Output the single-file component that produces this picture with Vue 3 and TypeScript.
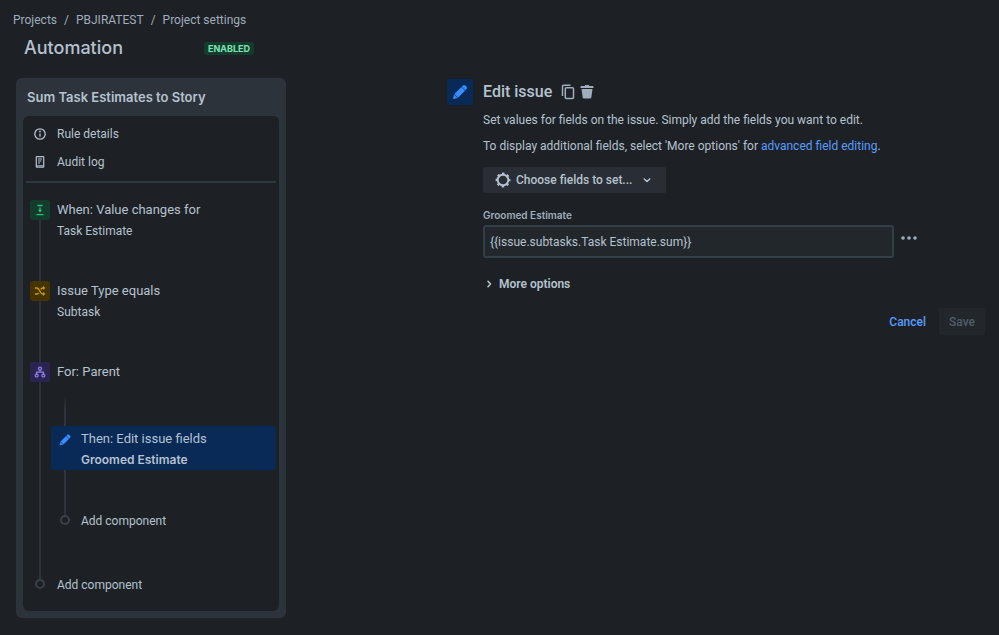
<script setup lang="ts">
import { ref } from 'vue'

interface Crumb {
  label: string
}

interface RuleNode {
  kind: 'trigger' | 'condition'
  title: string
  detail: string
}

const crumbs: Crumb[] = [
  { label: 'Projects' },
  { label: 'PBJIRATEST' },
  { label: 'Project settings' },
]

const nodes: RuleNode[] = [
  { kind: 'trigger', title: 'When: Value changes for', detail: 'Task Estimate' },
  { kind: 'condition', title: 'Issue Type equals', detail: 'Subtask' },
]

const pencil =
  'M13.9 5.3l4.900 4.900L9.300 19.600l-4.900-4.900zM4 15.300l4.700 4.700-5 1.200c-.6.1-1-.4-.9-.9zM14.300 4.900l1.700-1.700c.9-.9 2.200-.9 3.100 0l1.700 1.700c.9.9.9 2.200 0 3.100l-1.700 1.700z'

const estimate = ref('{{issue.subtasks.Task Estimate.sum}}')
</script>

<template>
  <div class="page">
    <header class="top">
      <nav class="crumbs" aria-label="Breadcrumb">
        <template v-for="(crumb, index) in crumbs" :key="crumb.label">
          <span v-if="index > 0" class="slash">/</span>
          <a href="#">{{ crumb.label }}</a>
        </template>
      </nav>
      <div class="title-row">
        <h1>Automation</h1>
        <span class="badge">ENABLED</span>
      </div>
    </header>

    <div class="columns">
      <aside class="rule">
        <h2>Sum Task Estimates to Story</h2>
        <div class="rule-body">
          <div class="links">
            <a href="#">
              <svg width="14" height="14" viewBox="0 0 14 14" fill="none" stroke="currentColor" stroke-width="1.3">
                <circle cx="7" cy="7" r="5.200" />
                <path d="M7 6.4v3.4" />
                <circle cx="7" cy="4.500" r=".9" fill="currentColor" stroke="none" />
              </svg>
              Rule details
            </a>
            <a href="#">
              <svg width="14" height="14" viewBox="0 0 14 14" fill="none" stroke="currentColor" stroke-width="1.200">
                <rect x="3.300" y="1.600" width="7.400" height="10.600" rx=".5" />
                <path d="M5 4h4M5 6h3.500M5 8h2" />
                <path d="M3.400 10.800h7.200" stroke-width="1" />
              </svg>
              Audit log
            </a>
          </div>

          <div class="chain">
            <div v-for="node in nodes" :key="node.title" class="node">
              <div class="rail">
                <span class="tile" :class="node.kind">
                  <svg v-if="node.kind === 'trigger'" width="12" height="12" viewBox="0 0 12 12" fill="none" stroke="currentColor" stroke-width="1.3">
                    <path d="M3.4 1.5h5.2M6 3.6v4.2M2.5 10.7h7" />
                    <path d="M4 5.700h4L6 8.400z" fill="currentColor" stroke="none" />
                  </svg>
                  <svg v-else width="12" height="12" viewBox="0 0 12 12" fill="none" stroke="currentColor" stroke-width="1.3">
                    <path d="M1 3h2c2.400 0 3.200 6 5.600 6H10" />
                    <path d="M1 9h2c.8 0 1.300-.5 1.800-1.200M6.700 4.300C7.200 3.500 7.800 3 8.600 3H10" />
                    <path d="M9 1l2.300 2L9 5zM9 7l2.300 2L9 11z" fill="currentColor" stroke="none" />
                  </svg>
                </span>
                <span class="line"></span>
              </div>
              <button type="button" class="node-text">
                <span class="node-title">{{ node.title }}</span>
                <span class="node-detail">{{ node.detail }}</span>
              </button>
            </div>

            <div class="node branch">
              <div class="rail">
                <span class="tile scope">
                  <svg width="12" height="12" viewBox="0 0 12 12" fill="none" stroke="currentColor" stroke-width="1.3">
                    <rect x="4.600" y="1.200" width="2.800" height="2.600" rx=".9" />
                    <path d="M6 3.800v2.200M2.600 8.400V6.100h6.800v2.300" />
                    <rect x="1.300" y="8.400" width="2.700" height="2.400" rx=".8" />
                    <rect x="8" y="8.400" width="2.700" height="2.400" rx=".8" />
                  </svg>
                </span>
                <span class="line"></span>
              </div>
              <div class="branch-body">
                <button type="button" class="node-text">
                  <span class="node-title">For: Parent</span>
                </button>
                <div class="nested">
                  <span class="line fade"></span>
                  <button type="button" class="selected">
                    <svg width="14" height="14" viewBox="0 0 24 24" fill="currentColor">
                      <path :d="pencil" />
                    </svg>
                    <span class="node-text">
                      <span class="node-title">Then: Edit issue fields</span>
                      <strong class="node-detail">Groomed Estimate</strong>
                    </span>
                  </button>
                  <span class="line gap"></span>
                  <button type="button" class="add"><span class="dot"></span>Add component</button>
                </div>
              </div>
            </div>

            <button type="button" class="add outer"><span class="dot"></span>Add component</button>
          </div>
        </div>
      </aside>

      <main class="editor">
        <span class="editor-icon">
          <svg width="18" height="18" viewBox="0 0 24 24" fill="currentColor">
            <path :d="pencil" />
          </svg>
        </span>
        <div class="editor-body">
          <div class="editor-head">
            <h2>Edit issue</h2>
            <button type="button" class="icon-button" aria-label="Duplicate">
              <svg width="14" height="16" viewBox="0 0 14 16" fill="none" stroke="currentColor" stroke-width="1.500">
                <path d="M1.500 12V2.500c0-.8.4-1.200 1.200-1.200H9.500" />
                <rect x="4.300" y="3.800" width="8.200" height="10.700" rx="1" />
              </svg>
            </button>
            <button type="button" class="icon-button" aria-label="Delete">
              <svg width="14" height="16" viewBox="0 0 14 16" fill="currentColor">
                <path d="M.5 3.100c0-.7.400-1.200 1.100-1.200h3.100l.6-.8h3.400l.6.800h3.100c.7 0 1.100.5 1.100 1.200v.9H.5zM1.500 4.900h11l-1.200 8.700c-.1.700-.5 1-1.200 1H3.900c-.7 0-1.100-.3-1.200-1z" />
              </svg>
            </button>
          </div>
          <p>Set values for fields on the issue. Simply add the fields you want to edit.</p>
          <p>
            To display additional fields, select 'More options' for
            <a href="#">advanced field editing</a>.
          </p>

          <button type="button" class="choose">
            <svg width="16" height="16" viewBox="0 0 16 16" fill="none" stroke="currentColor">
              <circle cx="8" cy="8" r="5.300" stroke-width="1.900" />
              <circle cx="8" cy="8" r="6.600" stroke-width="1.600" stroke-dasharray="2.592 2.592" stroke-dashoffset="1.296" />
            </svg>
            Choose fields to set...
            <svg class="chevron" width="10" height="10" viewBox="0 0 10 10" fill="none" stroke="currentColor" stroke-width="1.600" stroke-linecap="round" stroke-linejoin="round">
              <path d="M2.300 4L5 6.500 7.700 4" />
            </svg>
          </button>

          <label for="groomed">Groomed Estimate</label>
          <div class="field">
            <input id="groomed" v-model="estimate" type="text" />
            <button type="button" class="dots" aria-label="Field actions">
              <svg width="16" height="4" viewBox="0 0 16 4" fill="currentColor">
                <circle cx="2" cy="2" r="1.800" />
                <circle cx="8" cy="2" r="1.800" />
                <circle cx="14" cy="2" r="1.800" />
              </svg>
            </button>
          </div>

          <button type="button" class="more">
            <svg width="10" height="10" viewBox="0 0 10 10" fill="none" stroke="currentColor" stroke-width="1.600" stroke-linecap="round" stroke-linejoin="round">
              <path d="M4 2.300L6.500 5 4 7.700" />
            </svg>
            More options
          </button>

          <div class="actions">
            <button type="button" class="cancel">Cancel</button>
            <button type="button" class="save" disabled>Save</button>
          </div>
        </div>
      </main>
    </div>
  </div>
</template>

<style>
body {
  background: #1d2125;
}
</style>

<style scoped>
.page {
  min-height: 100vh;
  box-sizing: border-box;
  padding: 12px 14px 17px 13px;
  background: #1d2125;
  color: #b6c2cf;
  font-family: Roboto, 'Liberation Sans', sans-serif;
  font-size: 12px;
  line-height: 16px;
}

h1,
h2,
p {
  margin: 0;
}

h1,
h2 {
  font-weight: 500;
}

h1,
.badge,
.rule h2,
strong,
label {
  font-family: Inter, 'Liberation Sans', sans-serif;
}

button {
  padding: 0;
  border: 0;
  background: none;
  color: inherit;
  font: inherit;
  text-align: left;
}

a {
  color: inherit;
  text-decoration: none;
}

svg {
  display: block;
  flex: none;
}

.crumbs {
  display: flex;
  gap: 7px;
  color: #9fadbc;
}

.title-row {
  display: flex;
  align-items: center;
  justify-content: space-between;
  width: 230px;
  height: 24px;
  margin: 8px 0 0 11px;
}

h1 {
  font-size: 18px;
  line-height: 24px;
}

.badge {
  padding: 0 4px;
  border-radius: 3px;
  background: #143c2c;
  color: #7ee2b8;
  font-size: 9px;
  font-weight: 700;
  line-height: 13px;
}

.columns {
  display: flex;
  align-items: flex-start;
  margin-top: 18px;
}

.rule {
  flex: none;
  box-sizing: border-box;
  width: 270px;
  margin-left: 3px;
  padding: 0 7px 7px;
  border-radius: 6px;
  background: #2c333a;
}

.rule h2 {
  padding-left: 4px;
  font-size: 13px;
  font-weight: 600;
  line-height: 38px;
}

.rule-body {
  padding: 4px 3px 20px;
  border-radius: 6px;
  background: #1d2125;
}

.links {
  padding-bottom: 5px;
  border-bottom: 2px solid #2c3a3f;
}

.links a {
  display: flex;
  align-items: center;
  gap: 10px;
  height: 28px;
  padding-left: 7px;
}

.chain {
  display: flex;
  flex-direction: column;
  padding: 17px 0 0 4px;
}

.node {
  display: flex;
  gap: 7px;
  min-height: 81px;
}

.rail {
  display: flex;
  flex: none;
  flex-direction: column;
  align-items: center;
  width: 20px;
}

.tile {
  display: grid;
  place-items: center;
  width: 20px;
  height: 20px;
  border-radius: 3px;
}

.trigger {
  background: #143c2c;
  color: #2abb7f;
}

.condition {
  background: #453300;
  color: #cf9f02;
}

.scope {
  background: #2b2451;
  color: #8f7ee7;
}

.line {
  display: block;
  flex: 1;
  width: 2px;
  background: #2c333a;
}

.node-text {
  display: flex;
  flex-direction: column;
  align-self: flex-start;
  gap: 4px;
}

.node-title {
  font-size: 13px;
  line-height: 19px;
}

.node-detail {
  font-size: 12px;
  line-height: 16px;
}

strong.node-detail {
  font-weight: 600;
}

.branch-body {
  flex: 1;
}

.nested {
  margin: 15px 0 0 -6px;
}

.nested .line {
  height: 30px;
  margin-left: 13px;
}

.nested .fade {
  background: linear-gradient(transparent, #2c333a 40%);
}

.nested .gap {
  height: 45px;
}

.selected {
  display: flex;
  box-sizing: border-box;
  width: 100%;
  padding: 3px 7px 2px;
  border-radius: 2px;
  background: #092957;
  gap: 9px;
}

.selected svg {
  margin-top: 4px;
  color: #388bff;
}

.add {
  display: flex;
  align-items: flex-start;
  padding-left: 9px;
  gap: 11px;
  line-height: 12px;
}

.dot {
  box-sizing: border-box;
  width: 10px;
  height: 10px;
  border: 2px solid #38414a;
  border-radius: 50%;
}

.branch {
  min-height: 217px;
}

.outer {
  padding-left: 5px;
  gap: 12px;
}

.editor {
  display: flex;
  flex: 1;
  gap: 10px;
  min-width: 0;
  margin: 1px 0 0 161px;
}

.editor-icon {
  display: grid;
  flex: none;
  place-items: center;
  width: 26px;
  height: 26px;
  border-radius: 2px;
  background: #092957;
  color: #388bff;
}

.editor-body {
  flex: 1;
  min-width: 0;
}

.editor-head {
  display: flex;
  align-items: center;
  height: 26px;
}

.editor-head h2 {
  margin-right: 9px;
  font-size: 16px;
  line-height: 20px;
}

.icon-button {
  margin-right: 5px;
  color: #9fadbc;
}

p {
  margin-top: 7px;
}

p + p {
  margin-top: 10px;
}

p a {
  color: #579dff;
}

.choose {
  display: flex;
  align-items: center;
  gap: 5px;
  height: 26px;
  margin-top: 13px;
  padding: 0 14px 0 12px;
  border-radius: 2px;
  background: #282e33;
  font-weight: 500;
}

.chevron {
  margin-left: 5px;
}

label {
  display: block;
  margin-top: 15px;
  color: #9fadbc;
  font-size: 10px;
  font-weight: 600;
  line-height: 14px;
}

.field {
  display: flex;
  gap: 7px;
  margin: 3px 68px 0 0;
}

input {
  box-sizing: border-box;
  flex: 1;
  min-width: 0;
  height: 33px;
  padding: 0 5px;
  border: 2px solid #323f44;
  border-radius: 3px;
  outline: 0;
  background: #22272b;
  color: inherit;
  font: inherit;
}

.dots {
  height: 26px;
  color: #9fadbc;
}

.more {
  display: flex;
  align-items: center;
  gap: 5px;
  margin-top: 18px;
  padding-left: 1px;
  font-weight: 600;
}

.actions {
  display: flex;
  justify-content: flex-end;
  gap: 13px;
  margin-top: 16px;
  font-weight: 500;
}

.actions button {
  height: 27px;
}

.cancel {
  color: #579dff;
}

.save {
  padding: 0 10px;
  border-radius: 3px;
  background: #22272b;
  color: #505c68;
}
</style>
